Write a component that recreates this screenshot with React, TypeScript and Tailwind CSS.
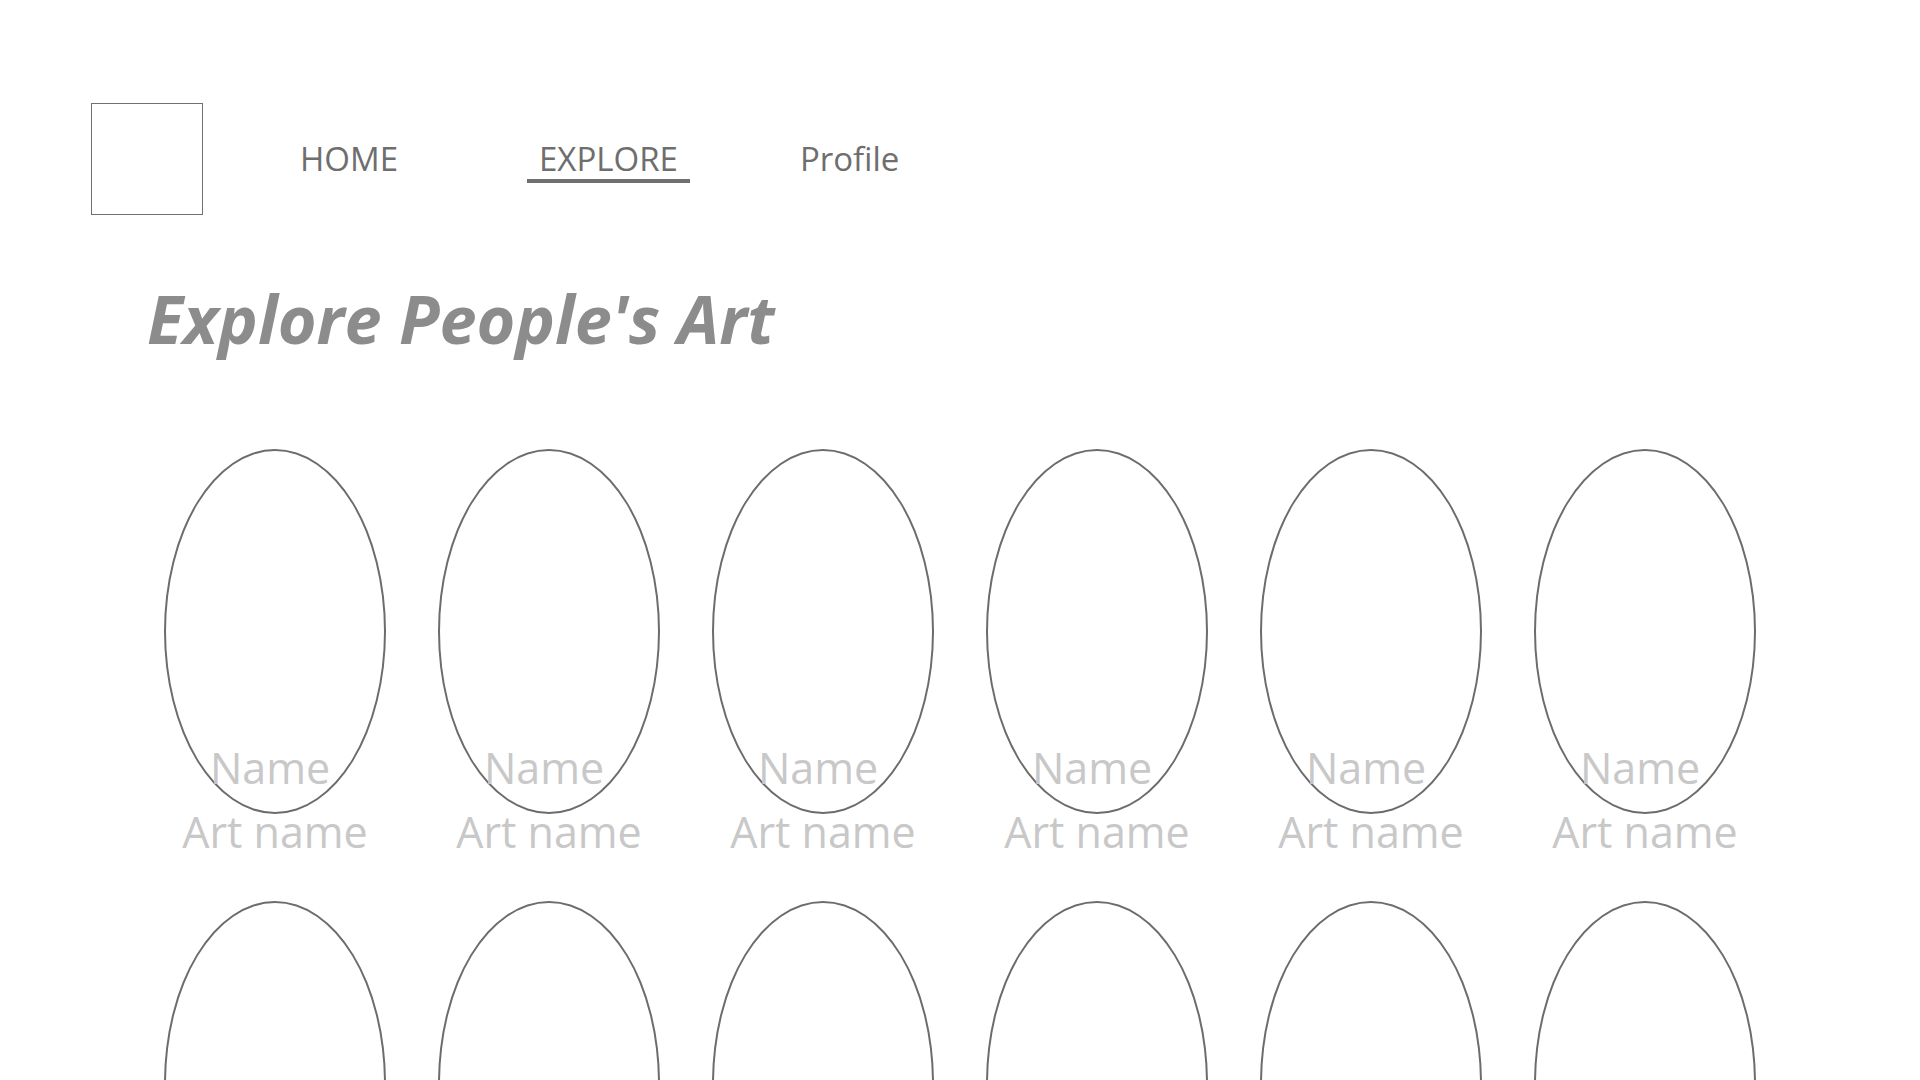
import React from "react";

const navItems = [
    { label: "HOME", ml: "ml-[85px]", active: false },
    { label: "EXPLORE", ml: "ml-[117px]", active: true },
    { label: "Profile", ml: "ml-[98px]", active: false },
];

const arts = Array.from({ length: 12 }, (_, i) => ({ id: i, name: "Name", art: "Art name" }));

function ArtCard({ name, art }: { name: string; art: string }) {
    return (
        <div className="flex flex-col items-center w-[222px]">
            <div className="w-[222px] h-[365px] rounded-[50%] border-[2.5px] border-[#6c6c6c] shrink-0" />
            <div className="-mt-[68px] pr-[10px] text-[43px] leading-none text-[#c8c8c8] whitespace-nowrap">{name}</div>
            <div className="mt-[21px] text-[43px] leading-none text-[#c8c8c8] whitespace-nowrap">{art}</div>
        </div>
    );
}

export default function App() {
    return (
        <div
            className="w-full h-[1080px] overflow-hidden bg-white pl-[91px] pt-[103px]"
            style={{ fontFamily: '"Open Sans", "Noto Sans", sans-serif' }}
        >
            {/* Header */}
            <header className="flex items-center">
                <div className="w-[112px] h-[112px] border border-[#707070] shrink-0" />
                <nav className="flex items-center">
                    {navItems.map((item) => (
                        <a
                            key={item.label}
                            className={`${item.ml} px-3 pt-[7px] pb-1 border-b-4 text-[33px] leading-none text-[#6e6e6e] ${
                                item.active ? "border-[#707070]" : "border-transparent"
                            }`}
                        >
                            {item.label}
                        </a>
                    ))}
                </nav>
            </header>

            <h1 className="mt-[70px] ml-[56px] text-[66.5px] leading-none font-bold italic text-[#8c8c8c]">
                Explore People's Art
            </h1>

            {/* Gallery */}
            <div className="mt-[97px] ml-[73px] grid grid-cols-[repeat(6,222px)] gap-x-[52px] gap-y-[48px]">
                {arts.map((a) => (
                    <ArtCard key={a.id} name={a.name} art={a.art} />
                ))}
            </div>
        </div>
    );
}
